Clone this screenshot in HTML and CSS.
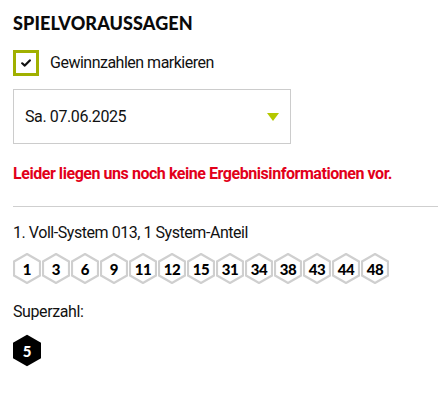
FILE: index.html
```html
<!DOCTYPE html>
<html lang="de">
<head>
<meta charset="utf-8">
<link rel="stylesheet" href="styles.css">
</head>
<body>
<main class="page">
  <h2 class="title">SPIELVORAUSSAGEN</h2>
  <label class="check">
    <span class="box">
      <svg width="10" height="8" viewBox="0 0 10 8"><path d="M1.2 4.3 L3.8 6.6 L8.8 1.4" fill="none" stroke="#111" stroke-width="2.2" stroke-linecap="round" stroke-linejoin="round"/></svg>
    </span>
    <span class="check-label">Gewinnzahlen markieren</span>
  </label>
  <div class="select">
    <span class="select-text">Sa. 07.06.2025</span>
    <svg class="caret" width="12" height="8" viewBox="0 0 12 8"><polygon points="0,0 12,0 6,8" fill="#b4c800"/></svg>
  </div>
  <p class="notice">Leider liegen uns noch keine Ergebnisinformationen vor.</p>
  <hr class="divider">
  <p class="system">1. Voll-System 013, 1 System-Anteil</p>
  <ul class="numbers">
    <li class="hex"><svg viewBox="0 0 28 31"><polygon points="14,1 27,8.5 27,22.5 14,30 1,22.5 1,8.5"/></svg><span>1</span></li>
    <li class="hex"><svg viewBox="0 0 28 31"><polygon points="14,1 27,8.5 27,22.5 14,30 1,22.5 1,8.5"/></svg><span>3</span></li>
    <li class="hex"><svg viewBox="0 0 28 31"><polygon points="14,1 27,8.5 27,22.5 14,30 1,22.5 1,8.5"/></svg><span>6</span></li>
    <li class="hex"><svg viewBox="0 0 28 31"><polygon points="14,1 27,8.5 27,22.5 14,30 1,22.5 1,8.5"/></svg><span>9</span></li>
    <li class="hex"><svg viewBox="0 0 28 31"><polygon points="14,1 27,8.5 27,22.5 14,30 1,22.5 1,8.5"/></svg><span>11</span></li>
    <li class="hex"><svg viewBox="0 0 28 31"><polygon points="14,1 27,8.5 27,22.5 14,30 1,22.5 1,8.5"/></svg><span>12</span></li>
    <li class="hex"><svg viewBox="0 0 28 31"><polygon points="14,1 27,8.5 27,22.5 14,30 1,22.5 1,8.5"/></svg><span>15</span></li>
    <li class="hex"><svg viewBox="0 0 28 31"><polygon points="14,1 27,8.5 27,22.5 14,30 1,22.5 1,8.5"/></svg><span>31</span></li>
    <li class="hex"><svg viewBox="0 0 28 31"><polygon points="14,1 27,8.5 27,22.5 14,30 1,22.5 1,8.5"/></svg><span>34</span></li>
    <li class="hex"><svg viewBox="0 0 28 31"><polygon points="14,1 27,8.5 27,22.5 14,30 1,22.5 1,8.5"/></svg><span>38</span></li>
    <li class="hex"><svg viewBox="0 0 28 31"><polygon points="14,1 27,8.5 27,22.5 14,30 1,22.5 1,8.5"/></svg><span>43</span></li>
    <li class="hex"><svg viewBox="0 0 28 31"><polygon points="14,1 27,8.5 27,22.5 14,30 1,22.5 1,8.5"/></svg><span>44</span></li>
    <li class="hex"><svg viewBox="0 0 28 31"><polygon points="14,1 27,8.5 27,22.5 14,30 1,22.5 1,8.5"/></svg><span>48</span></li>
  </ul>
  <p class="super-label">Superzahl:</p>
  <div class="numbers super">
    <span class="hex hex-dark"><svg viewBox="0 0 28 31"><polygon points="14,1 27,8.5 27,22.5 14,30 1,22.5 1,8.5"/></svg><span>5</span></span>
  </div>
</main>
</body>
</html>
```

FILE: styles.css
```css
* { box-sizing: border-box; }
html, body { margin: 0; padding: 0; background: #fff; }
body {
  font-family: Roboto, "Liberation Sans", sans-serif;
  font-stretch: 92%;
  color: #111;
}
.page {
  padding: 13px 0 0 13px;
}
.title {
  margin: 0;
  font-family: Lato, sans-serif;
  font-weight: 900;
  font-size: 18px;
  line-height: 20px;
  letter-spacing: 0.1px;
  color: #0a0a0a;
}
.check {
  display: flex;
  align-items: center;
  gap: 11px;
  margin-top: 17px;
}
.box {
  width: 26px;
  height: 26px;
  border: 3px solid #a0b000;
  display: flex;
  align-items: center;
  justify-content: center;
  background: #fff;
}
.check-label {
  font-size: 16px;
  line-height: 20px;
  letter-spacing: -0.5px;
}
.select {
  width: 278px;
  height: 55px;
  margin-top: 13px;
  border: 1px solid #ccc;
  display: flex;
  align-items: center;
  justify-content: space-between;
  padding: 0 11px 0 11px;
}
.select-text {
  font-size: 16px;
  letter-spacing: -0.4px;
}
.caret { display: block; }
.notice {
  margin: 20px 0 0;
  color: #e2001a;
  font-weight: 700;
  font-size: 16px;
  line-height: 20px;
  letter-spacing: -0.45px;
}
.divider {
  margin: 22px 0 0;
  border: 0;
  border-top: 1px solid #cfcfcf;
}
.system {
  margin: 16px 0 0;
  font-size: 16px;
  line-height: 20px;
  letter-spacing: -0.45px;
}
.numbers {
  list-style: none;
  margin: 10px 0 0;
  padding: 0;
  display: flex;
  gap: 1px;
}
.hex {
  position: relative;
  width: 28px;
  height: 31px;
  display: flex;
  align-items: center;
  justify-content: center;
}
.hex svg {
  position: absolute;
  left: 0;
  top: 0;
  width: 100%;
  height: 100%;
}
.hex polygon {
  fill: #fff;
  stroke: #cfcfcf;
  stroke-width: 2.2;
}
.hex span {
  position: relative;
  font-family: Lato, sans-serif;
  font-weight: 900;
  font-size: 15px;
  letter-spacing: -0.4px;
  color: #000;
}
.hex-dark {
  width: 28px;
  height: 33px;
}
.hex-dark polygon {
  fill: #000;
  stroke: #000;
}
.hex-dark span { color: #fff; }
.super-label {
  margin: 18px 0 0;
  font-size: 16px;
  line-height: 20px;
  letter-spacing: -0.4px;
}
.numbers.super { margin-top: 12px; }
```
